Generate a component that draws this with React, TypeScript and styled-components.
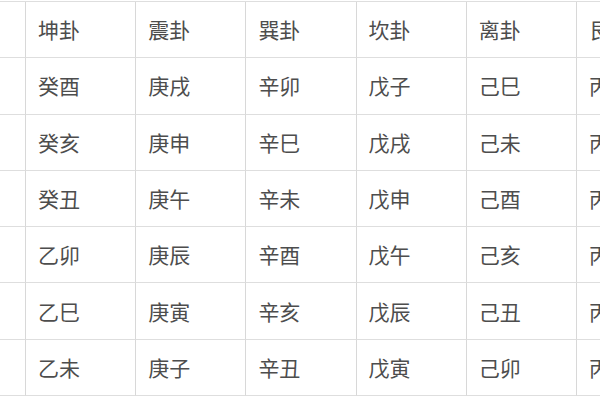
import React from "react";
import styled, { createGlobalStyle } from "styled-components";

const Global = createGlobalStyle`
  html, body { margin: 0; padding: 0; background: #fff; }
  body { width: 600px; height: 400px; overflow: hidden; }
`;

const Viewport = styled.div`
  width: 600px;
  height: 400px;
  overflow: hidden;
  padding-top: 1px;
  box-sizing: border-box;
  background: #fff;
`;

const Table = styled.div`
  display: grid;
  grid-template-columns: 26px repeat(6, 110.2px);
  grid-auto-rows: 56.3px;
  width: max-content;
  border-top: 1px solid #dedede;
`;

const Cell = styled.div<{ $first?: boolean }>`
  box-sizing: border-box;
  border-bottom: 1px solid #dedede;
  border-right: 1px solid #d8d8d8;
  display: flex;
  align-items: center;
  padding-left: 12px;
  padding-bottom: 1px;
  font-family: "Noto Sans CJK SC", "Noto Sans", sans-serif;
  font-size: 21px;
  color: #4d4d4d;
  white-space: nowrap;
  overflow: hidden;
`;

const header = ["", "坤卦", "震卦", "巽卦", "坎卦", "离卦", "艮卦"];
const rows = [
  ["", "癸酉", "庚戌", "辛卯", "戊子", "己巳", "丙寅"],
  ["", "癸亥", "庚申", "辛巳", "戊戌", "己未", "丙子"],
  ["", "癸丑", "庚午", "辛未", "戊申", "己酉", "丙戌"],
  ["", "乙卯", "庚辰", "辛酉", "戊午", "己亥", "丙申"],
  ["", "乙巳", "庚寅", "辛亥", "戊辰", "己丑", "丙午"],
  ["", "乙未", "庚子", "辛丑", "戊寅", "己卯", "丙辰"],
];

export default function App() {
  return (
    <>
      <Global />
      <Viewport>
        <Table>
          {[header, ...rows].map((r, i) =>
            r.map((t, j) => <Cell key={`${i}-${j}`}>{t}</Cell>)
          )}
        </Table>
      </Viewport>
    </>
  );
}
